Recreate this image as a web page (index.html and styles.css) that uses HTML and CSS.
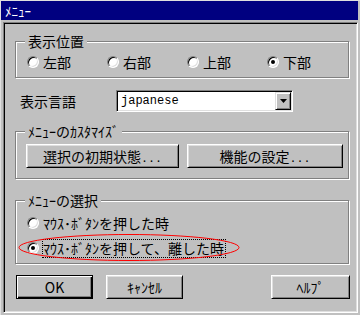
FILE: index.html
```html
<!DOCTYPE html>
<html lang="ja">

<head>
    <meta charset="UTF-8">
    <meta name="viewport" content="width=device-width, initial-scale=1.0">
    <title>ﾒﾆｭｰ</title>
    <link rel="stylesheet" href="styles.css">
</head>

<body>

    <div class="window">
        <div class="titlebar">ﾒﾆｭｰ</div>

        <div class="client">
            <div class="group position-group">
                <div class="group-title">表示位置</div>
                <div class="radio-row">
                    <div class="radio"><span class="dot"></span>左部</div>
                    <div class="radio"><span class="dot"></span>右部</div>
                    <div class="radio"><span class="dot"></span>上部</div>
                    <div class="radio"><span class="dot checked"></span>下部</div>
                </div>
            </div>

            <div class="lang-row">
                <span class="lang-label">表示言語</span>
                <div class="combo">
                    <span class="combo-text">japanese</span>
                    <span class="combo-btn">
                        <svg width="7" height="4" viewBox="0 0 7 4"><path d="M0 0h7L3.5 4z" fill="#000"/></svg>
                    </span>
                </div>
            </div>

            <div class="group custom-group">
                <div class="group-title">ﾒﾆｭｰのｶｽﾀﾏｲｽﾞ</div>
                <div class="custom-buttons">
                    <button class="btn btn-initial">選択の初期状態<span class="dots">...</span></button>
                    <button class="btn btn-function">機能の設定<span class="dots">...</span></button>
                </div>
            </div>

            <div class="group select-group">
                <div class="group-title">ﾒﾆｭｰの選択</div>
                <div class="option"><span class="dot"></span><span class="option-text">ﾏｳｽ･ﾎﾞﾀﾝを押した時</span></div>
                <div class="option second"><span class="dot checked"></span><span class="option-text focus">ﾏｳｽ･ﾎﾞﾀﾝを押して、離した時</span></div>
            </div>

            <div class="dialog-buttons">
                <button class="btn btn-ok">OK</button>
                <button class="btn btn-cancel">ｷｬﾝｾﾙ</button>
                <button class="btn btn-help">ﾍﾙﾌﾟ</button>
            </div>

            <!-- red marker drawn over the second option -->
            <svg class="annotation" width="222" height="28" viewBox="0 0 222 28">
                <ellipse cx="111" cy="13.5" rx="110" ry="13" fill="none" stroke="#ff0000" stroke-width="1"/>
            </svg>
        </div>
    </div>

</body>

</html>
```

FILE: styles.css
```css
body {
    margin: 0;
    font-family: "Noto Sans CJK JP", sans-serif;
    font-size: 14px;
    color: #000;
}

.window {
    width: 360px;
    height: 315px;
    box-sizing: border-box;
    background-color: #c0c0c0;
    border-top: 1px solid #dfdfdf;
    border-left: 1px solid #dfdfdf;
    padding: 0 2px 2px 0;
    display: flex;
    flex-direction: column;
}

.titlebar {
    height: 19px;
    background-color: #000080;
    color: #fff;
    font-size: 13px;
    line-height: 19px;
    padding-left: 4px;
}

.client {
    position: relative;
    flex: 1;
    margin: 2px 0 0 2px;
    padding: 0 8px 0 11px;
    border: 1px solid;
    border-color: #808080 #fff #fff #808080;
    box-shadow: inset 1px 1px #000, inset -1px -1px #dfdfdf;
}

/* etched group boxes */
.group {
    border: 1px solid #808080;
    box-shadow: inset 1px 1px #fff, 1px 1px #fff;
}

.group-title {
    width: fit-content;
    margin: -9px 0 0 9px;
    padding: 0 3px;
    background-color: #c0c0c0;
    line-height: 16px;
}

.position-group {
    margin-top: 18px;
    padding-bottom: 7px;
}

.radio-row {
    display: flex;
    margin-top: 5px;
    padding-left: 11px;
    height: 16px;
}

.radio {
    width: 80px;
    display: flex;
    align-items: center;
    line-height: 16px;
}

.dot {
    width: 12px;
    height: 12px;
    box-sizing: border-box;
    flex-shrink: 0;
    border-radius: 50%;
    border: 1px solid;
    border-color: #808080 #fff #fff #808080;
    background-color: #fff;
    box-shadow: inset 1px 1px #000, inset -1px -1px #dfdfdf;
    margin-right: 4px;
    display: flex;
    align-items: center;
    justify-content: center;
}

.dot.checked::after {
    content: "";
    width: 4px;
    height: 4px;
    border-radius: 50%;
    background-color: #000;
}

.lang-row {
    display: flex;
    align-items: center;
    margin-top: 12px;
    height: 22px;
    padding-left: 5px;
}

.lang-label {
    width: 96px;
}

.combo {
    width: 177px;
    height: 22px;
    box-sizing: border-box;
    display: flex;
    background-color: #fff;
    border: 1px solid;
    border-color: #808080 #fff #fff #808080;
    box-shadow: inset 1px 1px #000, inset -1px -1px #dfdfdf;
    padding: 1px;
}

.combo-text {
    flex: 1;
    padding-left: 3px;
    font-family: "Liberation Mono", monospace;
    font-size: 12px;
    line-height: 18px;
}

.combo-btn {
    width: 16px;
    height: 18px;
    box-sizing: border-box;
    background-color: #c0c0c0;
    border: 1px solid;
    border-color: #dfdfdf #000 #000 #dfdfdf;
    box-shadow: inset 1px 1px #fff, inset -1px -1px #808080;
    display: flex;
    align-items: center;
    justify-content: center;
}

.custom-group {
    margin-top: 19px;
    padding-bottom: 10px;
}

.custom-buttons {
    display: flex;
    gap: 8px;
    margin-top: 5px;
    padding-left: 10px;
}

.btn {
    height: 24px;
    box-sizing: border-box;
    padding: 0;
    font-family: "Noto Sans CJK JP", sans-serif;
    font-size: 14px;
    color: #000;
    background-color: #c0c0c0;
    border: 1px solid;
    border-color: #fff #000 #000 #fff;
    box-shadow: inset 1px 1px #dfdfdf, inset -1px -1px #808080;
}

.dots {
    font-family: "Liberation Mono", monospace;
    font-size: 11.7px;
}

.btn-initial {
    width: 153px;
}

.btn-function {
    width: 156px;
}

.select-group {
    margin-top: 21px;
    padding-bottom: 5px;
}

.option {
    display: flex;
    align-items: center;
    height: 20px;
    margin-top: 5px;
    padding-left: 11px;
    line-height: 17px;
}

.option.second .dot {
    margin-right: 3px;
}

.focus {
    border: 1px dotted #000;
    padding-right: 1px;
}

.dialog-buttons {
    display: flex;
    margin: 11px -1px 0 0;
    padding-left: 1px;
}

.btn-ok {
    width: 77px;
    border-color: #000;
    box-shadow: inset 1px 1px #fff, inset -1px -1px #000, inset -2px -2px #808080;
}

.btn-cancel {
    width: 77px;
    margin-left: 13px;
}

.btn-help {
    width: 79px;
    margin-left: auto;
}

.annotation {
    position: absolute;
    left: 14px;
    top: 211px;
}
```
